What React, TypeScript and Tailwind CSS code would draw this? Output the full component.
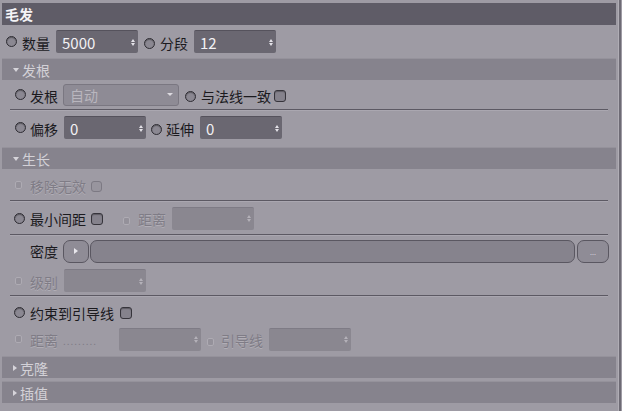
import React from "react";

const Radio = ({ disabled = false }: { disabled?: boolean }) =>
  disabled ? (
    <span className="inline-block w-[7px] h-[8px] rounded-[2px] border border-[#aeabb3] bg-[#94919a] shrink-0" />
  ) : (
    <span className="inline-block w-[11px] h-[11px] rounded-full border border-[#2e2c33] bg-[#8b8892] shadow-[inset_0_1px_1px_rgba(0,0,0,0.35)] shrink-0" />
  );

const Check = ({ disabled = false }: { disabled?: boolean }) => (
  <span
    className={
      disabled
        ? "inline-block w-[11px] h-[11px] rounded-[3px] border border-[#7c7983] bg-[#98959e] shrink-0"
        : "inline-block w-[12px] h-[12px] rounded-[3px] border border-[#36343b] bg-[#85828c] shadow-[inset_0_1px_1px_rgba(0,0,0,0.3)] shrink-0"
    }
  />
);

const Spin = ({ faded = false }: { faded?: boolean }) => (
  <span className="flex flex-col items-center gap-[1px] ml-auto mr-[3px]">
    <span
      className={`w-0 h-0 border-l-[2.5px] border-r-[2.5px] border-b-[3px] border-l-transparent border-r-transparent ${
        faded ? "border-b-[#b4b1b9]" : "border-b-[#e4e2e8]"
      }`}
    />
    <span
      className={`w-0 h-0 border-l-[2.5px] border-r-[2.5px] border-t-[3px] border-l-transparent border-r-transparent ${
        faded ? "border-t-[#b4b1b9]" : "border-t-[#e4e2e8]"
      }`}
    />
  </span>
);

const NumField = ({
  value,
  disabled = false,
}: {
  value?: string;
  disabled?: boolean;
}) => (
  <div
    className={`w-[82px] h-[23px] rounded-[2px] flex items-center pl-[6px] ${
      disabled
        ? "bg-[#8a8790] border-t border-[#7e7b85]"
        : "bg-[#6a6771] border-t border-[#55525c] text-[#f2f1f4]"
    }`}
  >
    <span className="text-[15px] leading-none">{value}</span>
    <Spin faded={disabled} />
  </div>
);

const Label = ({
  children,
  disabled = false,
}: {
  children: React.ReactNode;
  disabled?: boolean;
}) => (
  <span
    className={`text-[14px] leading-none whitespace-nowrap ${
      disabled ? "text-[#7f7c86] [text-shadow:0_1px_0_#b1aeb6]" : "text-[#1b1a1e]"
    }`}
  >
    {children}
  </span>
);

const Section = ({ title, open = true }: { title: string; open?: boolean }) => (
  <div className="mx-[2px] h-[22px] bg-[#86838d] border-t border-[#95929b] flex items-center pl-[11px] gap-[3px] shrink-0">
    {open ? (
      <span className="w-0 h-0 border-l-[3px] border-r-[3px] border-t-[4px] border-l-transparent border-r-transparent border-t-[#d6d4da]" />
    ) : (
      <span className="w-0 h-0 border-t-[3px] border-b-[3px] border-l-[4px] border-t-transparent border-b-transparent border-l-[#d6d4da]" />
    )}
    <span className="text-[14px] leading-none text-[#d3d1d7]">{title}</span>
  </div>
);

const Sep = () => (
  <div className="ml-[10px] w-[598px] h-[2px] border-t border-[#5c5963] bg-[#aaa7b0] shrink-0" />
);

export default function App() {
  return (
    <div
      className="w-[622px] h-[411px] bg-[#9e9ba4] flex overflow-hidden"
      style={{ fontFamily: '"Noto Sans CJK SC", "Noto Sans", sans-serif' }}
    >
      <div className="w-[618px] flex flex-col">
        <div className="mt-[3px] mx-[2px] h-[22px] bg-[#5f5c67] flex items-center pl-[3px] shrink-0">
          <span className="text-[14px] font-bold text-[#f4f3f6] leading-none">毛发</span>
        </div>

        <div className="h-[33px] flex items-center pl-[6px] shrink-0">
          <Radio />
          <span className="ml-[5px]">
            <Label>数量</Label>
          </span>
          <span className="ml-[6px]">
            <NumField value="5000" />
          </span>
          <span className="ml-[6px]">
            <Radio />
          </span>
          <span className="ml-[5px]">
            <Label>分段</Label>
          </span>
          <span className="ml-[6px]">
            <NumField value="12" />
          </span>
        </div>

        <Section title="发根" />

        <div className="h-[29px] flex items-center pl-[15px] shrink-0">
          <Radio />
          <span className="ml-[4px]">
            <Label>发根</Label>
          </span>
          <div className="ml-[5px] w-[116px] h-[22px] rounded-[3px] bg-[#8e8b95] border border-[#7a7781] flex items-center pl-[6px]">
            <span className="text-[14px] leading-none text-[#b9b6be]">自动</span>
            <span className="ml-auto mr-[5px] w-0 h-0 border-l-[3px] border-r-[3px] border-t-[3px] border-l-transparent border-r-transparent border-t-[#dcdae0]" />
          </div>
          <span className="ml-[6px]">
            <Radio />
          </span>
          <span className="ml-[5px]">
            <Label>与法线一致</Label>
          </span>
          <span className="ml-[3px]">
            <Check />
          </span>
        </div>

        <Sep />

        <div className="h-[33px] flex items-center pl-[15px] shrink-0">
          <Radio />
          <span className="ml-[4px]">
            <Label>偏移</Label>
          </span>
          <span className="ml-[6px]">
            <NumField value="0" />
          </span>
          <span className="ml-[5px]">
            <Radio />
          </span>
          <span className="ml-[4px]">
            <Label>延伸</Label>
          </span>
          <span className="ml-[6px]">
            <NumField value="0" />
          </span>
        </div>

        <div className="h-[3px] shrink-0" />
        <Section title="生长" />

        <div className="h-[31px] flex items-center pl-[15px] shrink-0">
          <Radio disabled />
          <span className="ml-[8px]">
            <Label disabled>移除无效</Label>
          </span>
          <span className="ml-[5px]">
            <Check disabled />
          </span>
        </div>

        <Sep />

        <div className="h-[32px] flex items-center pl-[14px] shrink-0">
          <Radio />
          <span className="ml-[5px]">
            <Label>最小间距</Label>
          </span>
          <span className="ml-[5px]">
            <Check />
          </span>
          <span className="ml-[20px]">
            <Radio disabled />
          </span>
          <span className="ml-[8px]">
            <Label disabled>距离</Label>
          </span>
          <span className="ml-[6px]">
            <NumField disabled />
          </span>
        </div>

        <Sep />

        <div className="h-[30px] flex items-center pl-[30px] shrink-0">
          <Label>密度</Label>
          <div className="ml-[5px] w-[26px] h-[23px] rounded-[7px] border border-[#5a5761] bg-[#8f8c96] flex items-center justify-center">
            <span className="w-0 h-0 border-t-[3px] border-b-[3px] border-l-[4px] border-t-transparent border-b-transparent border-l-[#e8e6ec]" />
          </div>
          <div className="ml-[1px] w-[485px] h-[23px] rounded-[7px] border border-[#5a5761] bg-[#86838d]" />
          <div className="ml-[2px] w-[32px] h-[23px] rounded-[7px] border border-[#5a5761] bg-[#8f8c96] flex items-end justify-center pb-[6px]">
            <span className="text-[7px] leading-none text-[#dddbe1]">...</span>
          </div>
        </div>

        <div className="h-[29px] flex items-center pl-[15px] shrink-0">
          <Radio disabled />
          <span className="ml-[8px]">
            <Label disabled>级别</Label>
          </span>
          <span className="ml-[6px]">
            <NumField disabled />
          </span>
        </div>

        <Sep />

        <div className="h-[30px] flex items-center pl-[14px] shrink-0">
          <Radio />
          <span className="ml-[5px]">
            <Label>约束到引导线</Label>
          </span>
          <span className="ml-[6px]">
            <Check />
          </span>
        </div>

        <div className="h-[24px] flex items-center pl-[15px] shrink-0">
          <Radio disabled />
          <span className="ml-[8px]">
            <Label disabled>距离</Label>
          </span>
          <span className="ml-[5px] w-[52px] text-[10px] leading-none text-[#7f7c86] tracking-[1px] self-end mb-[5px]">
            .........
          </span>
          <span className="ml-[4px]">
            <NumField disabled />
          </span>
          <span className="ml-[6px]">
            <Radio disabled />
          </span>
          <span className="ml-[7px]">
            <Label disabled>引导线</Label>
          </span>
          <span className="ml-[6px]">
            <NumField disabled />
          </span>
        </div>

        <div className="h-[5px] shrink-0" />
        <Section title="克隆" open={false} />
        <div className="h-[3px] shrink-0" />
        <Section title="插值" open={false} />
      </div>
      <div className="w-[1px] bg-[#b0adb5]" />
      <div className="w-[2px] bg-[#6e6b75]" />
      <div className="flex-1 bg-[#9e9ba4]" />
    </div>
  );
}
